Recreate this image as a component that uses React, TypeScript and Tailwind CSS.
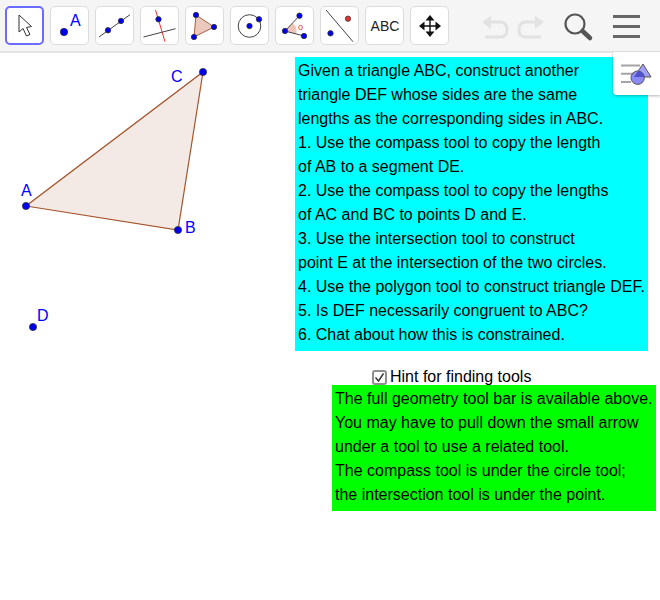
import React from "react";

const B = "#0000ff";
const Pt = ({ x, y, r = 3.6 }: { x: number; y: number; r?: number }) => (
  <circle cx={x} cy={y} r={r} fill="#0000f0" stroke="#333" strokeWidth={0.8} />
);

const Tool = ({ active, children }: { active?: boolean; children: React.ReactNode }) => (
  <div
    className={
      active
        ? "w-[39px] h-[39px] shrink-0 rounded-[5px] border-2 border-[#6b6bff] bg-white"
        : "w-[39px] h-[39px] shrink-0 rounded-[5px] border border-[#dcdcdc] bg-white"
    }
  >
    <div className={active ? "-m-[2px] w-[39px] h-[39px]" : "-m-[1px] w-[39px] h-[39px]"}>
      <svg width="39" height="39" viewBox="0 0 39 39">
        {children}
      </svg>
    </div>
  </div>
);

const Label = ({ x, y, children }: { x: number; y: number; children: string }) => (
  <text x={x} y={y} fill="#0000ff" fontSize="16" fontFamily="'Liberation Sans', Arial, sans-serif">
    {children}
  </text>
);

export default function App() {
  return (
    <div className="relative w-[660px] h-[600px] bg-white overflow-hidden font-['Liberation_Sans',Arial,sans-serif] text-black">
      <div className="flex items-start h-[53px] bg-[#f5f5f5] border-b-2 border-[#e4e4e4] pl-[5px] pt-[6px] gap-[6px]">
        <Tool active>
          <path d="M14 9 L14 26 L18 22.5 L21.5 30 L25 28.5 L21.5 21.5 L26.5 20.5 Z" fill="#fff" stroke="#333" strokeWidth="1" strokeLinejoin="round" />
        </Tool>
        <Tool>
          <circle cx="14" cy="26" r="3.7" fill="#0000f0" stroke="#222" strokeWidth="0.6" />
          <text x="20" y="19.5" fill={B} fontSize="16" fontFamily="'Liberation Sans', sans-serif">A</text>
        </Tool>
        <Tool>
          <line x1="4" y1="31" x2="35" y2="8.7" stroke="#444" strokeWidth="1" />
          <Pt x={13} y={24.3} r={2.7} /><Pt x={26} y={15} r={2.7} />
        </Tool>
        <Tool>
          <line x1="15.5" y1="4" x2="25" y2="35.7" stroke="#f03030" strokeWidth="1" />
          <line x1="3.5" y1="31" x2="35.5" y2="22.7" stroke="#444" strokeWidth="1" />
          <Pt x={18.5} y={13.3} r={2.7} />
        </Tool>
        <Tool>
          <polygon points="11,9 29,21 9,31" fill="#ecc9bd" stroke="#a9603f" strokeWidth="1" />
          <Pt x={11} y={9} r={2.7} /><Pt x={29} y={21} r={2.7} /><Pt x={9} y={31} r={2.7} />
        </Tool>
        <Tool>
          <circle cx="19.5" cy="20" r="11.3" fill="none" stroke="#444" strokeWidth="1" />
          <Pt x={19.5} y={20} r={2.7} /><Pt x={29} y={13.3} r={2.7} />
        </Tool>
        <Tool>
          <path d="M10 25 L18 17 Q23 22 21 28 Z" fill="#f0c6bb" />
          <line x1="10" y1="25" x2="24.5" y2="9.7" stroke="#444" strokeWidth="1" />
          <line x1="10" y1="25" x2="29" y2="30" stroke="#444" strokeWidth="1" />
          <text x="23" y="24" fill="#f03030" fontSize="9" fontFamily="'Liberation Sans', sans-serif">o</text>
          <Pt x={24.5} y={9.7} r={2.7} /><Pt x={10} y={25} r={2.7} /><Pt x={29} y={30} r={2.7} />
        </Tool>
        <Tool>
          <line x1="6" y1="4" x2="33" y2="35.7" stroke="#444" strokeWidth="1" />
          <circle cx="28" cy="12.7" r="2.7" fill="#e03030" stroke="#333" strokeWidth="0.7" />
          <Pt x={10.5} y={27.3} r={2.7} />
        </Tool>
        <Tool>
          <text x="20" y="25" textAnchor="middle" fill="#222" fontSize="14" fontFamily="'Liberation Sans', sans-serif">ABC</text>
        </Tool>
        <Tool>
          <path d="M20 12 L20 28 M12 20 L28 20" stroke="#111" strokeWidth="1.4" />
          <path d="M20 9 L24.5 14.5 L15.5 14.5 Z M20 31 L24.5 25.5 L15.5 25.5 Z M9 20 L14.5 15.5 L14.5 24.5 Z M31 20 L25.5 15.5 L25.5 24.5 Z" fill="#111" />
        </Tool>
        <div className="ml-[25px] mt-[9px] flex items-center gap-[6px] shrink-0">
          <svg width="30" height="25" viewBox="0 0 30 25" fill="none">
            <path d="M9 7 H20 Q27 7 27 15 Q27 22 20 22 H5" stroke="#e2e2e2" strokeWidth="3" />
            <path d="M2 7 L11 1 L11 14 Z" fill="#e2e2e2" />
          </svg>
          <svg width="30" height="25" viewBox="0 0 30 25" fill="none">
            <path d="M21 7 H10 Q3 7 3 15 Q3 22 10 22 H25" stroke="#e2e2e2" strokeWidth="3" />
            <path d="M28 7 L19 1 L19 14 Z" fill="#e2e2e2" />
          </svg>
        </div>
        <svg className="ml-[11px] mt-[7px] shrink-0" width="32" height="30" viewBox="0 0 32 30" fill="none">
          <circle cx="12" cy="11" r="9.5" stroke="#555" strokeWidth="2.2" />
          <line x1="19.5" y1="18" x2="27" y2="25" stroke="#555" strokeWidth="4.5" strokeLinecap="round" />
        </svg>
        <div className="ml-[12px] mt-[9px] flex flex-col gap-[7px] shrink-0">
          <div className="w-[27px] h-[3px] bg-[#666]" />
          <div className="w-[27px] h-[3px] bg-[#666]" />
          <div className="w-[27px] h-[3px] bg-[#666]" />
        </div>
      </div>

      <svg className="absolute left-0 top-0" width="660" height="600" viewBox="0 0 660 600">
        <polygon points="26,206 178,230 203,72" fill="#f3eae5" stroke="#a5532a" strokeWidth="1.2" />
        <Pt x={26} y={206} /><Pt x={178} y={230} /><Pt x={203} y={72} /><Pt x={33} y={327} />
        <Label x={21} y={196}>A</Label>
        <Label x={185} y={233}>B</Label>
        <Label x={171} y={82}>C</Label>
        <Label x={37} y={321}>D</Label>
      </svg>

      <div className="absolute left-[295px] top-[57px] w-[353px] h-[294px] bg-[#00ffff] pl-[3px] pt-[2px] text-[16px] leading-[24px] whitespace-nowrap">
        <div>Given a triangle ABC, construct another</div>
        <div>triangle DEF whose sides are the same</div>
        <div>lengths as the corresponding sides in ABC.</div>
        <div>1. Use the compass tool to copy the length</div>
        <div>of AB to a segment DE.</div>
        <div>2. Use the compass tool to copy the lengths</div>
        <div>of AC and BC to points D and E.</div>
        <div>3. Use the intersection tool to construct</div>
        <div>point E at the intersection of the two circles.</div>
        <div>4. Use the polygon tool to construct triangle DEF.</div>
        <div>5. Is DEF necessarily congruent to ABC?</div>
        <div>6. Chat about how this is constrained.</div>
      </div>

      <div className="absolute right-0 top-[52px] w-[47px] h-[43px] bg-white rounded-bl-[4px] shadow-[0_1px_3px_rgba(0,0,0,0.3)]">
        <svg width="47" height="43" viewBox="0 0 47 43" fill="none">
          <defs>
            <clipPath id="tri">
              <path d="M30 12 L38 25 H21 Z" />
            </clipPath>
          </defs>
          <path d="M8 13.5 H27 M8 21.7 H20 M8 30 H18" stroke="#a5a5a5" strokeWidth="2" />
          <path d="M30 12 L38 25 H21 Z" fill="#a0a0f5" stroke="#555" strokeWidth="1" />
          <circle cx="24.7" cy="25.7" r="6.7" fill="#8a8af5" stroke="#555" strokeWidth="1" />
          <circle cx="24.7" cy="25.7" r="6.7" fill="#5050c8" clipPath="url(#tri)" />
        </svg>
      </div>

      <label className="absolute left-[372px] top-[368px] flex items-center gap-[3px] text-[16px] leading-[18px] whitespace-nowrap">
        <span className="w-[15px] h-[15px] rounded-[3px] border-2 border-[#8f8f8f] bg-white flex items-center justify-center">
          <svg width="11" height="11" viewBox="0 0 11 11" fill="none">
            <path d="M1.5 5.5 L4.5 9 L9.5 1.5" stroke="#333" strokeWidth="1.4" />
          </svg>
        </span>
        Hint for finding tools
      </label>

      <div className="absolute left-[332px] top-[385px] w-[324px] h-[126px] bg-[#00ff00] pl-[3px] pt-[2px] text-[16px] leading-[24px] whitespace-nowrap">
        <div>The full geometry tool bar is available above.</div>
        <div>You may have to pull down the small arrow</div>
        <div>under a tool to use a related tool.</div>
        <div>The compass tool is under the circle tool;</div>
        <div>the intersection tool is under the point.</div>
      </div>
    </div>
  );
}
